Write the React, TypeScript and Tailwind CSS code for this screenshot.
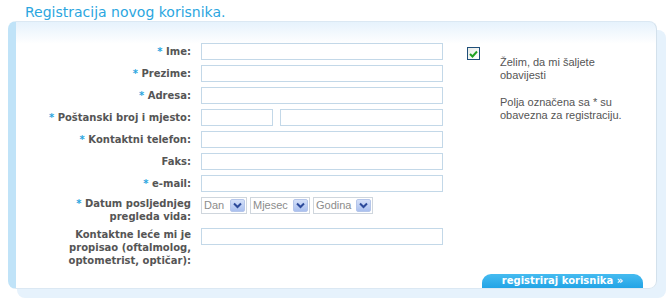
import type { ReactNode } from "react";

const Star = () => <span className="text-[#2ba6e0]">* </span>;

function Field({ label, required, children, multi }: { label: ReactNode; required?: boolean; children: ReactNode; multi?: boolean }) {
  return (
    <div className={`flex gap-[10px] ${multi ? "items-start" : "items-center"}`}>
      <div className="w-[175px] shrink-0 text-right text-[10px] leading-[13px] font-bold text-[#555555] font-['DejaVu_Sans',Verdana,sans-serif]">
        {required && <Star />}
        {label}
      </div>
      {children}
    </div>
  );
}

const TextInput = ({ w = "w-[242px]" }: { w?: string }) => (
  <div className={`${w} h-[17px] border border-[#c3d8e8] bg-white`} />
);

function FakeSelect({ text, w }: { text: string; w: string }) {
  return (
    <div className={`${w} h-[17px] border border-[#cfd6dd] bg-white flex items-center justify-between pl-[2px] pr-[1px]`}>
      <span className="text-[11px] text-[#8c8c8c] leading-none">{text}</span>
      <span className="w-[15px] h-[13px] rounded-[2px] bg-[linear-gradient(to_bottom,#d4e0f8,#aac0ef)] border border-[#b5c6ea] flex items-center justify-center">
        <svg width="9" height="7" viewBox="0 0 9 7">
          <path d="M1 1.5 L4.5 5 L8 1.5" fill="none" stroke="#2c4a9a" strokeWidth="2" />
        </svg>
      </span>
    </div>
  );
}

export default function App() {
  return (
    <div className="w-[672px] h-[305px] bg-white font-['Liberation_Sans',Arial,sans-serif] overflow-hidden">
      {/* Title */}
      <div className="h-[21px] pl-[25px] pt-[4px] text-[14px] leading-[16px] text-[#2ba6e0] font-['DejaVu_Sans',Verdana,sans-serif]">
        Registracija novog korisnika.
      </div>

      {/* Panel */}
      <div className="ml-[8px] w-[649px] rounded-[8px] border-l-[8px] border-l-[#c0e3f8] border-y border-r border-y-[#dbe8f3] border-r-[#d3e1ec] bg-[linear-gradient(to_bottom,#e6f2fc,#ffffff_22px)] shadow-[9px_9px_0_#e6f2fc]">
        <div className="flex pt-[21px]">
          {/* Form */}
          <div className="flex flex-col gap-[5px]">
            <Field label="Ime:" required><TextInput /></Field>
            <Field label="Prezime:" required><TextInput /></Field>
            <Field label="Adresa:" required><TextInput /></Field>
            <Field label="Poštanski broj i mjesto:" required>
              <div className="flex gap-[7px]">
                <TextInput w="w-[72px]" />
                <TextInput w="w-[163px]" />
              </div>
            </Field>
            <Field label="Kontaktni telefon:" required><TextInput /></Field>
            <Field label="Faks:"><TextInput /></Field>
            <Field label="e-mail:" required><TextInput /></Field>
            <Field label={<>Datum posljednjeg<br />pregleda vida:</>} required multi>
              <div className="flex gap-[3px]">
                <FakeSelect text="Dan" w="w-[46px]" />
                <FakeSelect text="Mjesec" w="w-[60px]" />
                <FakeSelect text="Godina" w="w-[60px]" />
              </div>
            </Field>
            <Field label={<>Kontaktne leće mi je<br />propisao (oftalmolog,<br />optometrist, optičar):</>} multi>
              <TextInput />
            </Field>
          </div>

          {/* Right column */}
          <div className="ml-[24px] pt-[4px] text-[11px] leading-[13px] text-[#555555]">
            <div className="w-[13px] h-[13px] border border-[#1f4f7a] bg-[linear-gradient(135deg,#e8ebe6,#ffffff)] flex items-center justify-center">
              <svg width="9" height="8" viewBox="0 0 9 8">
                <path d="M1 4 L3.5 6.5 L8 1.5" fill="none" stroke="#21a121" strokeWidth="2" />
              </svg>
            </div>
            <div className="pl-[33px] -mt-[4px]">
              <p>Želim, da mi šaljete<br />obavijesti</p>
              <p className="mt-[14px]">Polja označena sa * su<br />obavezna za registraciju.</p>
            </div>
          </div>
        </div>

        {/* Submit */}
        <div className="flex justify-end pr-[13px] mt-[7px]">
          <div className="w-[161px] h-[14px] rounded-t-[9px] bg-[linear-gradient(to_bottom,#45bbf0,#23a4e6)] text-white text-[10px] font-bold leading-[14px] text-center font-['DejaVu_Sans',Verdana,sans-serif]">
            registriraj korisnika »
          </div>
        </div>
      </div>
    </div>
  );
}
